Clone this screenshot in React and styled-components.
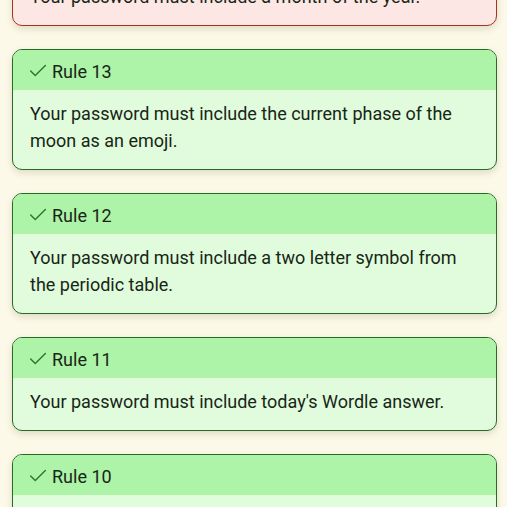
import React, { useLayoutEffect, useRef } from 'react';
import styled, { createGlobalStyle } from 'styled-components';
import { Check, X } from 'lucide-react';

const GlobalStyle = createGlobalStyle`
  html, body {
    margin: 0;
    padding: 0;
    background: #fcf9e8;
  }
  body {
    font-family: Roboto, "Noto Sans", "Liberation Sans", sans-serif;
  }
`;

const Viewport = styled.div`
  height: 507px;
  overflow: hidden;
  background: #fcf9e8;
`;

const RuleList = styled.div`
  display: flex;
  flex-direction: column;
  gap: 23px;
  padding: 20px 10px 20px 12px;
`;

const Card = styled.div`
  border: 1px solid ${(p) => (p.$ok ? '#2a6a26' : '#a8321f')};
  border-radius: 10px;
  overflow: hidden;
  background: ${(p) => (p.$ok ? '#e0fcdc' : '#fde7e4')};
  box-shadow: 0 3px 7px rgba(70, 70, 30, 0.16);
  color: #182517;
`;

const Header = styled.div`
  display: flex;
  align-items: center;
  gap: 3px;
  height: 40px;
  box-sizing: border-box;
  padding: 2px 14px 0;
  background: ${(p) => (p.$ok ? '#adf3a8' : '#fbbfb6')};
  font-size: 18px;
  line-height: 27px;
  svg {
    color: ${(p) => (p.$ok ? '#2e7a2b' : '#a8321f')};
    flex-shrink: 0;
  }
`;

const Body = styled.div`
  padding: 10px 17px 15px 17px;
  font-size: 18px;
  line-height: 27px;
`;

const rules = [
  { n: 14, ok: false, text: 'Your password must include a month of the year.' },
  { n: 13, ok: true, text: 'Your password must include the current phase of the moon as an emoji.' },
  { n: 12, ok: true, text: 'Your password must include a two letter symbol from the periodic table.' },
  { n: 11, ok: true, text: "Your password must include today's Wordle answer." },
  { n: 10, ok: true, text: 'Your password must include this CAPTCHA:' },
];

const RuleCard = ({ n, ok, text }) => (
  <Card $ok={ok}>
    <Header $ok={ok}>
      {ok ? <Check size={22} strokeWidth={1.6} /> : <X size={22} strokeWidth={1.6} />}
      <span>Rule {n}</span>
    </Header>
    <Body>{text}</Body>
  </Card>
);

const App = () => {
  const ref = useRef(null);

  useLayoutEffect(() => {
    // page is scrolled so the first card sits mostly above the top edge
    if (ref.current) ref.current.scrollTop = 88;
  }, []);

  return (
    <>
      <GlobalStyle />
      <Viewport ref={ref}>
        <RuleList>
          {rules.map((r) => (
            <RuleCard key={r.n} {...r} />
          ))}
        </RuleList>
      </Viewport>
    </>
  );
};

export default App;
